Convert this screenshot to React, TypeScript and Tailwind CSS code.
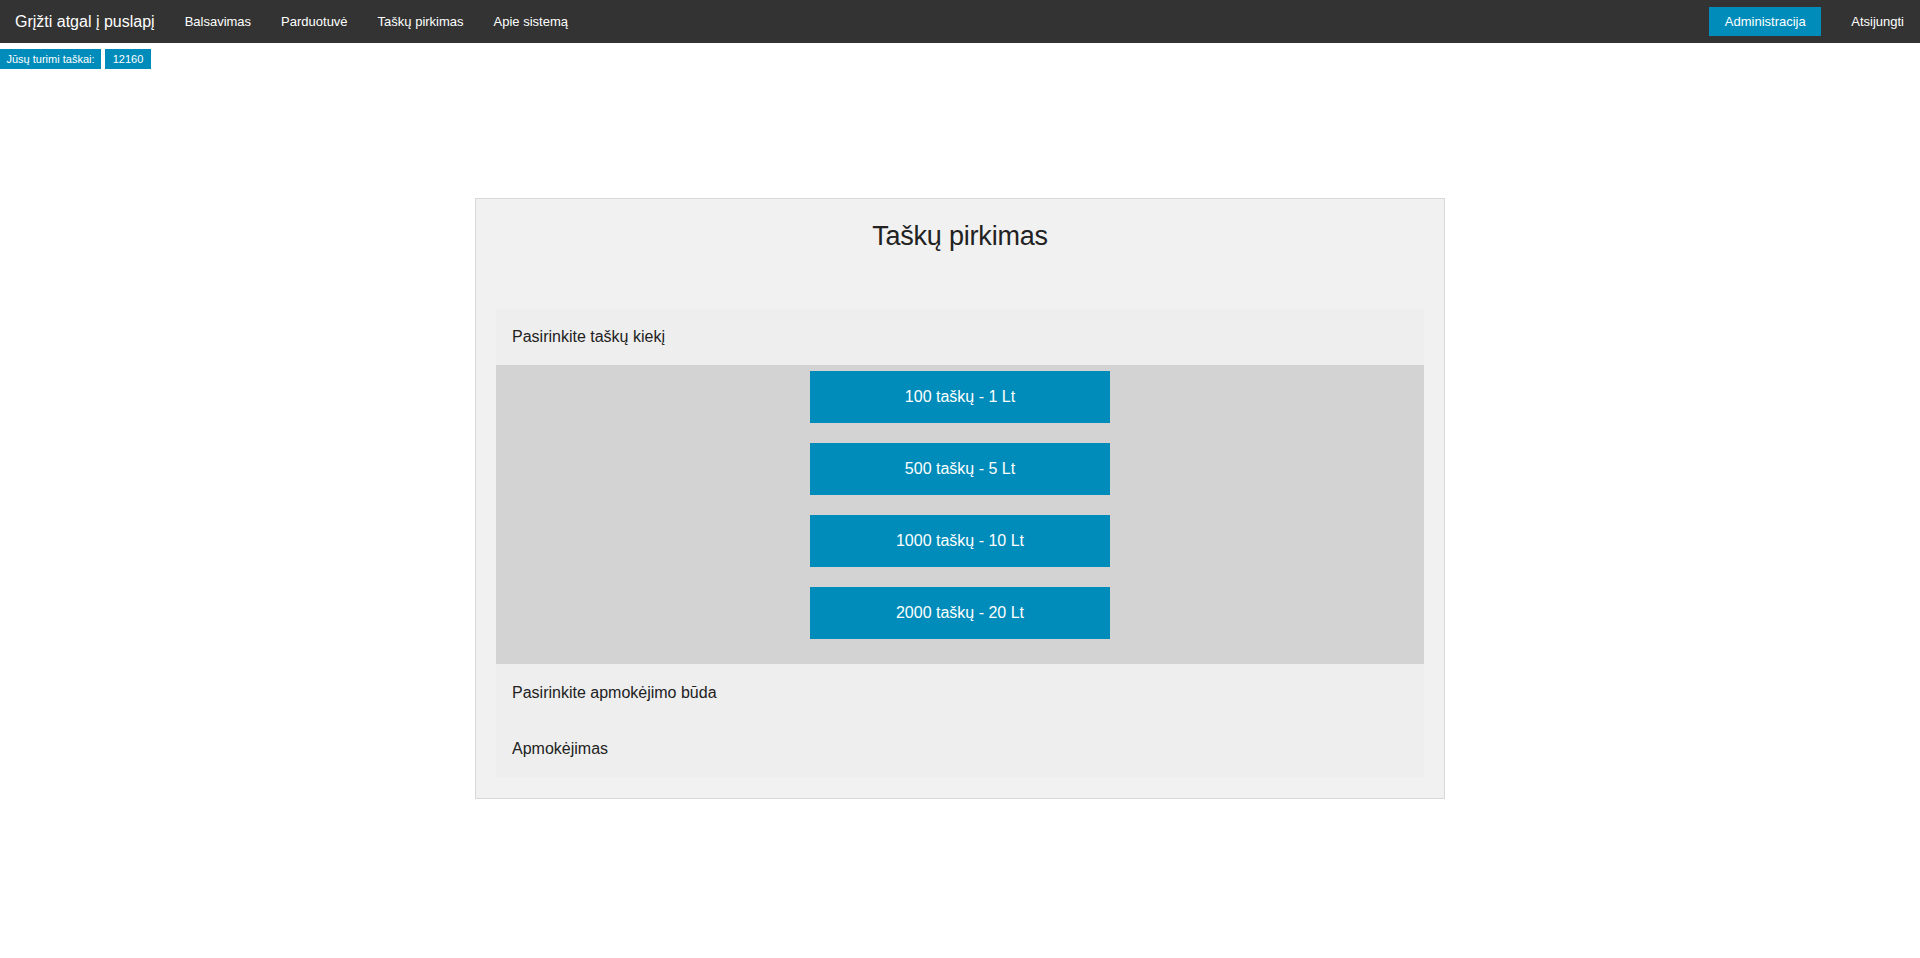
const navLinks = ["Balsavimas", "Parduotuvė", "Taškų pirkimas", "Apie sistemą"];

const packages = [
  { points: 100, price: 1 },
  { points: 500, price: 5 },
  { points: 1000, price: 10 },
  { points: 2000, price: 20 },
];

function TopBar() {
  return (
    <nav className="flex h-[43px] items-center bg-[#333333] text-white">
      <a href="#" className="px-[15px] text-[16px] leading-[43px]">
        Grįžti atgal į puslapį
      </a>
      <ul className="flex">
        {navLinks.map((link) => (
          <li key={link}>
            <a href="#" className="block px-[15px] text-[13px] leading-[43px]">
              {link}
            </a>
          </li>
        ))}
      </ul>
      <ul className="ml-auto flex items-center">
        <li>
          <a href="#" className="flex h-[29px] w-[112px] items-center justify-center bg-[#008cba] text-[13px]">
            Administracija
          </a>
        </li>
        <li>
          <a href="#" className="block pl-[30px] pr-[16px] text-[13px] leading-[43px]">
            Atsijungti
          </a>
        </li>
      </ul>
    </nav>
  );
}

function PointsBadges({ points }: { points: number }) {
  return (
    <div className="mt-[6px] flex gap-1 text-[11px] text-white">
      <span className="flex h-5 w-[101px] items-center justify-center bg-[#008cba]">Jūsų turimi taškai:</span>
      <span className="flex h-5 w-[46px] items-center justify-center bg-[#008cba]">{points}</span>
    </div>
  );
}

export default function App() {
  return (
    <div className="min-h-screen bg-white font-['Liberation_Sans',Arial,sans-serif] text-[#222222]">
      <TopBar />
      <PointsBadges points={12160} />

      <div className="mx-auto mt-[129px] w-[970px] border border-[#d8d8d8] bg-[#f1f1f1] px-5 pt-[19px] pb-[21px]">
        <h2 className="text-center text-[27px] leading-[36px] tracking-[-0.2px]">Taškų pirkimas</h2>

        <div className="mt-[55px] bg-[#eeeeee]">
          <div className="flex h-14 items-center px-4 text-base">Pasirinkite taškų kiekį</div>

          <div className="flex flex-col items-center gap-5 bg-[#d3d3d3] pt-1.5 pb-[25px]">
            {packages.map((p) => (
              <button key={p.points} className="h-[52px] w-[300px] bg-[#008cba] text-base text-white">
                {p.points} taškų - {p.price} Lt
              </button>
            ))}
          </div>

          <div className="flex h-[57px] items-center px-4 text-base">Pasirinkite apmokėjimo būda</div>
          <div className="flex h-14 items-center px-4 text-base">Apmokėjimas</div>
        </div>
      </div>
    </div>
  );
}
